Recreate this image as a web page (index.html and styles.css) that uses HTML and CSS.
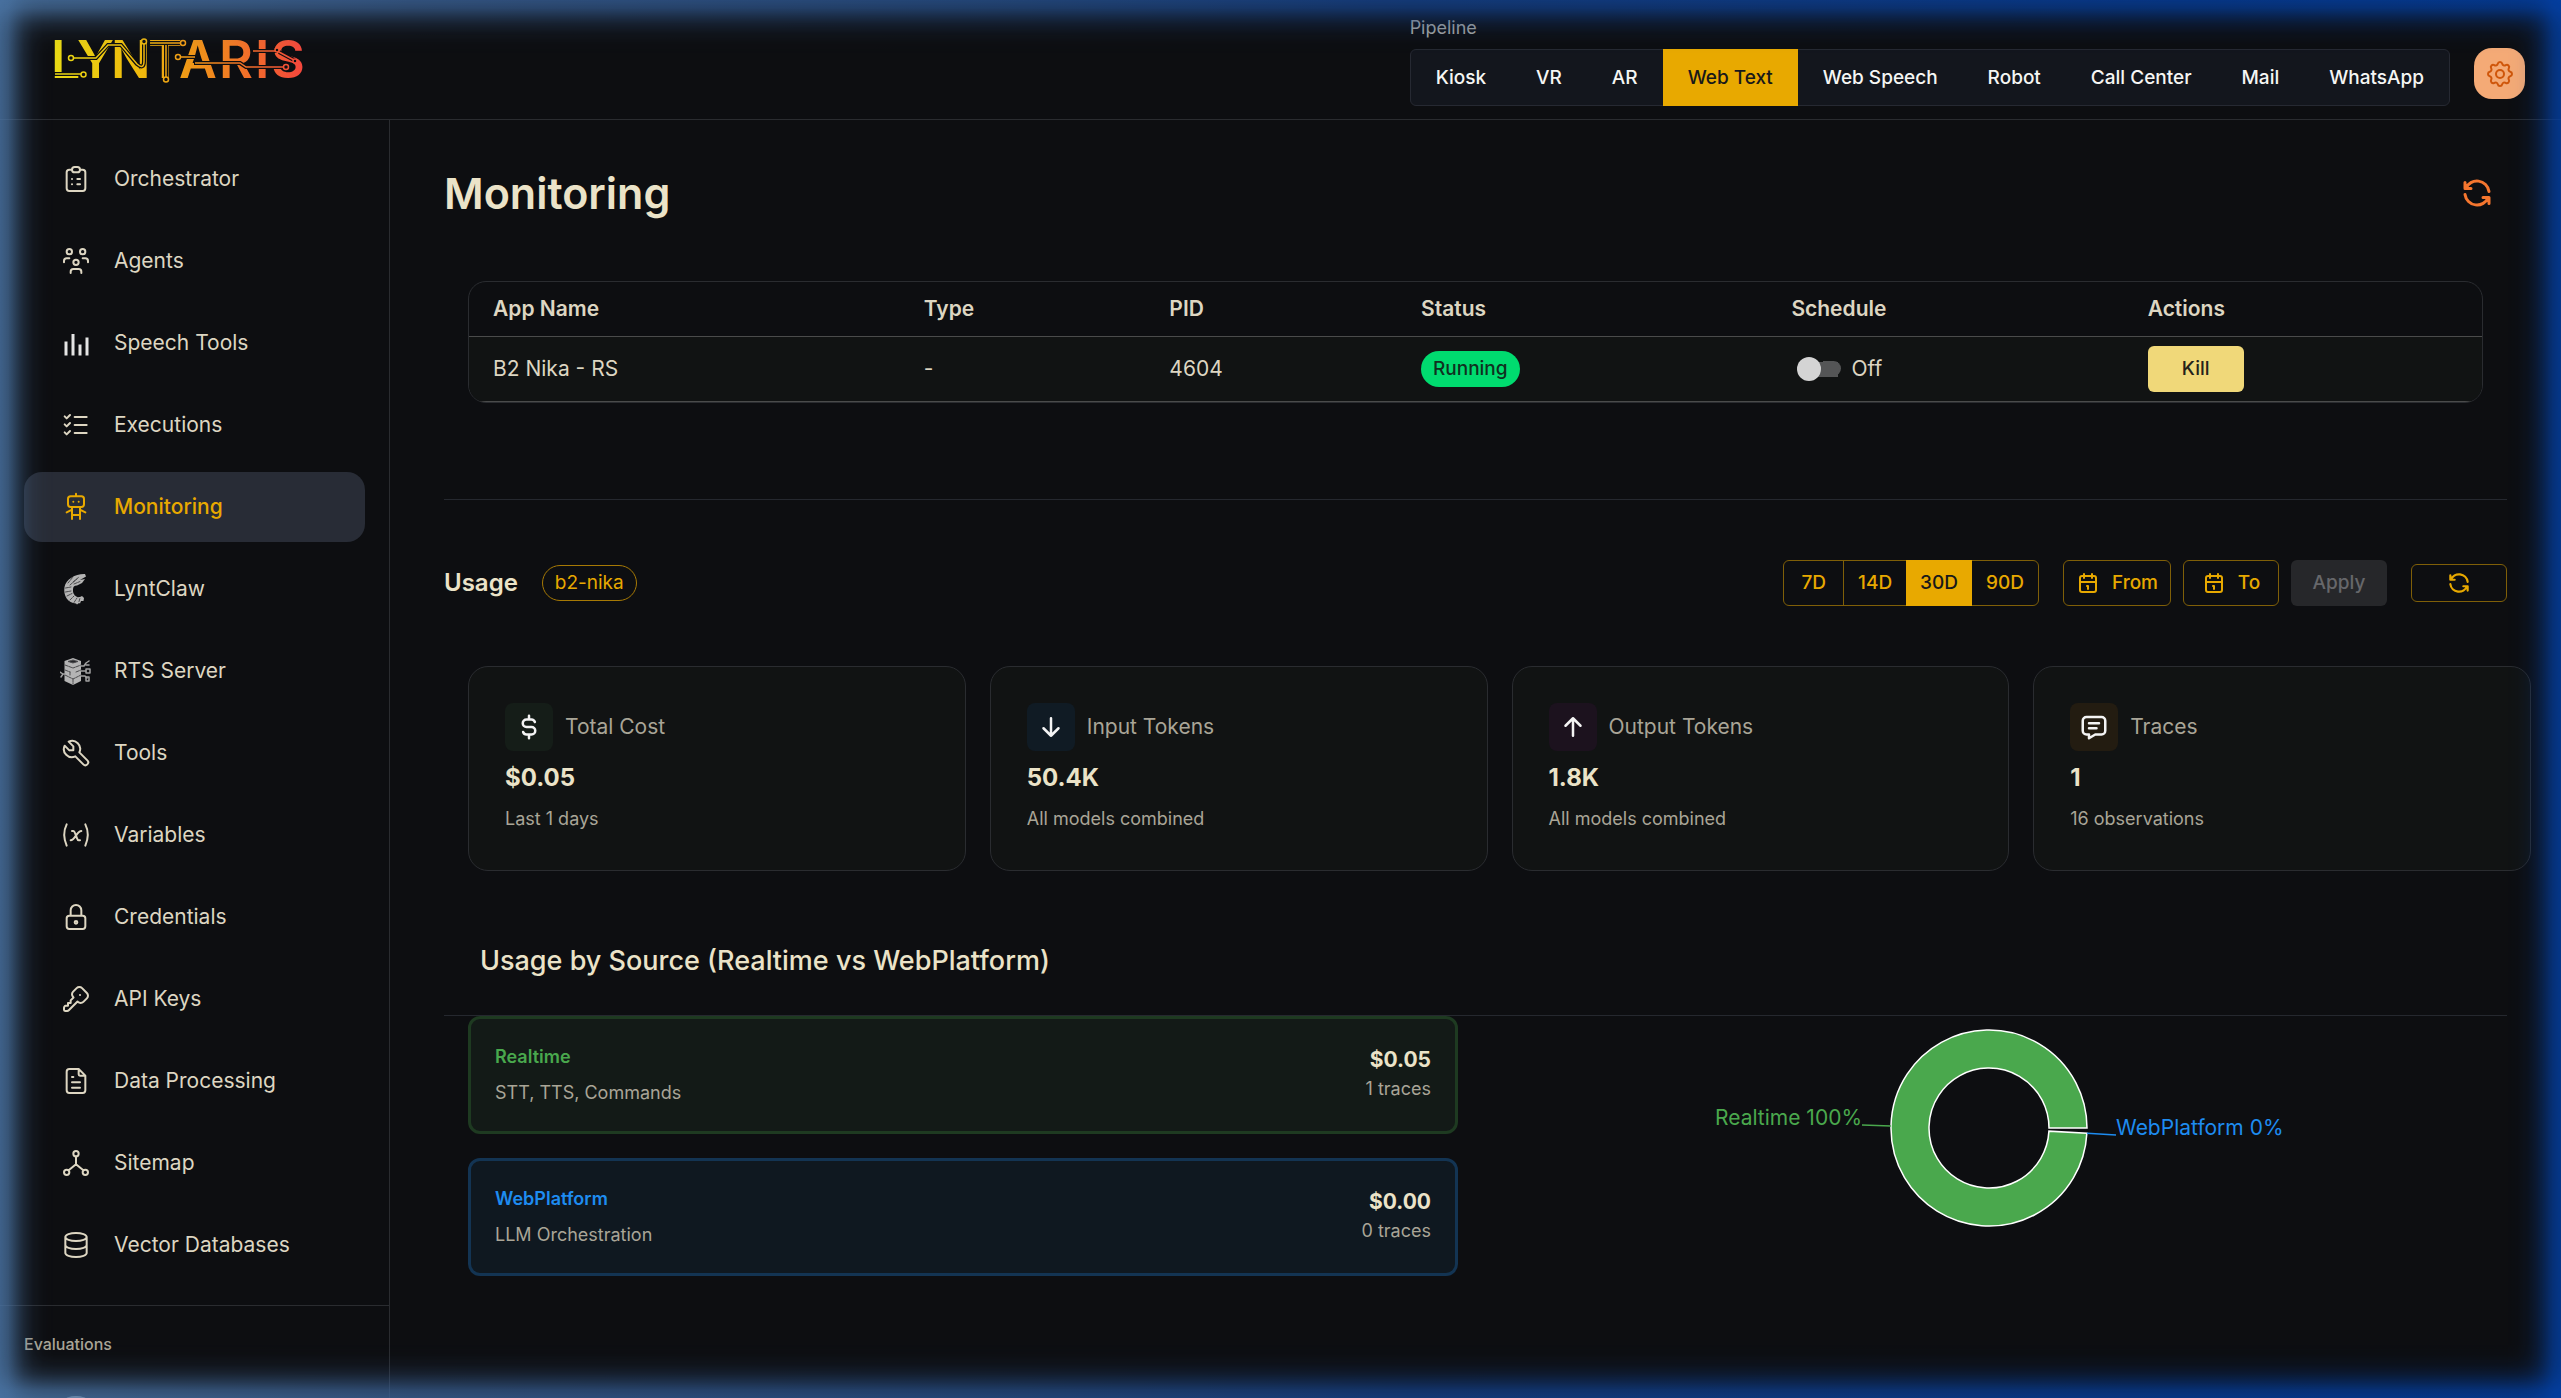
FILE: index.html
```html
<!DOCTYPE html>
<html lang="en">
<head>
<meta charset="utf-8">
<title>Lyntaris – Monitoring</title>
<link rel="stylesheet" href="styles.css">
</head>
<body>
<svg class="defs" aria-hidden="true">
  <symbol id="i-refresh" viewBox="0 0 24 24"><path d="M20 11a8.1 8.1 0 0 0 -15.5 -2m-.5 -4v4h4M4 13a8.1 8.1 0 0 0 15.5 2m.5 4v-4h-4"/></symbol>
  <symbol id="i-calendar" viewBox="0 0 24 24"><path d="M4 7a2 2 0 0 1 2 -2h12a2 2 0 0 1 2 2v12a2 2 0 0 1 -2 2h-12a2 2 0 0 1 -2 -2zM16 3v4M8 3v4M4 11h16M11 15h1M12 15v3"/></symbol>
  <symbol id="i-database" viewBox="0 0 24 24"><path d="M4 6a8 3 0 1 0 16 0a8 3 0 1 0 -16 0M4 6v6a8 3 0 0 0 16 0v-6M4 12v6a8 3 0 0 0 16 0v-6"/></symbol>
</svg>

<div class="app">
  <header class="topbar">
    <svg class="logo" viewBox="52 34 256 52" role="img" aria-label="Lyntaris">
      <defs>
        <linearGradient id="brand" gradientUnits="userSpaceOnUse" x1="55" y1="0" x2="302" y2="0">
          <stop offset="0" stop-color="#e9da14"/><stop offset=".35" stop-color="#efb80c"/>
          <stop offset=".65" stop-color="#f0861e"/><stop offset="1" stop-color="#f4473c"/>
        </linearGradient>
      </defs>
      <text class="logo-text" y="77" x="51 77 111 148 179 219 255 271" fill="url(#brand)">LYNTARIS</text>
      <g class="logo-gap">
        <path d="M54 73H84M71 57H96L108 44H121L137 63Q144 69 144 60V40"/>
        <path d="M149 42H183M166 44V79M178 56H196M194 62H240L246 66H286M252 50H277M279 51L296 60"/>
      </g>
      <g class="logo-wire">
        <path d="M55 73H81M73 57H96L108 44H121L137 63Q144 69 144 60V43"/>
        <path d="M150 42H181M166 44V76M180 56H195M195 62H240L246 66H284M253 50H276M279 51L294 59"/>
      </g>
      <g class="logo-node">
        <circle cx="83.500" cy="73.500" r="2.500"/><circle cx="71" cy="57" r="2.500"/><circle cx="144" cy="40.500" r="2.500"/>
        <circle cx="183" cy="42" r="2.500"/><circle cx="166" cy="78.500" r="2.500"/><circle cx="178" cy="56" r="2.500"/>
        <circle cx="286" cy="66" r="2.500"/><circle cx="277" cy="49" r="2"/><circle cx="295" cy="60" r="2"/>
      </g>
    </svg>

    <div class="pipeline">
      <span class="pipeline-label" id="pipeline-label">Pipeline</span>
      <div class="pipeline-group" role="group" aria-labelledby="pipeline-label">
        <button type="button">Kiosk</button>
        <button type="button">VR</button>
        <button type="button">AR</button>
        <button type="button" class="is-active" aria-pressed="true">Web Text</button>
        <button type="button">Web Speech</button>
        <button type="button">Robot</button>
        <button type="button">Call Center</button>
        <button type="button">Mail</button>
        <button type="button">WhatsApp</button>
      </div>
    </div>
    <button type="button" class="settings" aria-label="Settings">
      <svg class="icon" viewBox="0 0 24 24"><path d="M10.325 4.317c.426 -1.756 2.924 -1.756 3.35 0a1.724 1.724 0 0 0 2.573 1.066c1.543 -.94 3.31 .826 2.37 2.37a1.724 1.724 0 0 0 1.065 2.572c1.756 .426 1.756 2.924 0 3.35a1.724 1.724 0 0 0 -1.066 2.573c.94 1.543 -.826 3.31 -2.37 2.37a1.724 1.724 0 0 0 -2.572 1.065c-.426 1.756 -2.924 1.756 -3.35 0a1.724 1.724 0 0 0 -2.573 -1.066c-1.543 .94 -3.31 -.826 -2.37 -2.37a1.724 1.724 0 0 0 -1.065 -2.572c-1.756 -.426 -1.756 -2.924 0 -3.35a1.724 1.724 0 0 0 1.066 -2.573c-.94 -1.543 .826 -3.31 2.37 -2.37c1 .608 2.296 .07 2.572 -1.065zM9 12a3 3 0 1 0 6 0a3 3 0 0 0 -6 0"/></svg>
    </button>
  </header>

  <nav class="sidebar" aria-label="Main">
    <div class="nav-group">
      <a href="#"><svg class="icon" viewBox="0 0 24 24"><path d="M9 5h-2a2 2 0 0 0 -2 2v12a2 2 0 0 0 2 2h10a2 2 0 0 0 2 -2v-12a2 2 0 0 0 -2 -2h-2M9 5a2 2 0 0 1 2 -2h2a2 2 0 0 1 2 2a2 2 0 0 1 -2 2h-2a2 2 0 0 1 -2 -2zM9 12h.01M13 12h2M9 16h.01M13 16h2"/></svg>Orchestrator</a>
      <a href="#"><svg class="icon" viewBox="0 0 24 24"><path d="M10 13a2 2 0 1 0 4 0a2 2 0 0 0 -4 0M8 21v-1a2 2 0 0 1 2 -2h4a2 2 0 0 1 2 2v1M15 5a2 2 0 1 0 4 0a2 2 0 0 0 -4 0M17 10h2a2 2 0 0 1 2 2v1M5 5a2 2 0 1 0 4 0a2 2 0 0 0 -4 0M3 13v-1a2 2 0 0 1 2 -2h2"/></svg>Agents</a>
      <a href="#"><svg class="icon icon-bars" viewBox="0 0 32 32"><path d="M6 14.500v14M13 7v21.500M20 17.500v11M27 10.500v18"/></svg>Speech Tools</a>
      <a href="#"><svg class="icon" viewBox="0 0 24 24"><path d="M3.500 5.500l1.500 1.500l2.500 -2.500M3.500 11.500l1.500 1.500l2.500 -2.500M3.500 17.500l1.500 1.500l2.500 -2.500M11 6h9M11 12h9M11 18h9"/></svg>Executions</a>
      <a href="#" class="is-active" aria-current="page"><svg class="icon" viewBox="0 0 24 24"><path d="M6 6a2 2 0 0 1 2 -2h8a2 2 0 0 1 2 2v4a2 2 0 0 1 -2 2h-8a2 2 0 0 1 -2 -2zM12 2v2M9 12v9M15 12v9M5 16l4 -2M15 14l4 2M9 18h6M10 8v.01M14 8v.01"/></svg>Monitoring</a>
      <a href="#"><svg class="icon icon-solid" viewBox="0 0 32 32">
        <path d="M25 1C16 .5 6 6 4.500 14C3 23 8 30 16 30.500L17 31.500L19 30L20 30.500L21 28L23.500 28L24 25L22 23L20 24C16 25 12.500 21 13 16.500C13 14 14 12.500 17 12.500L22 10L25 6L20 7L26 3.500Z"/>
        <path class="etch" d="M8 10L13 4M10 12L17 6M13 9L19 4M5.500 15L11 14M5.500 19L11 18M7 23L12 20.500M10 27L14 23M14 29.500L17 25M19 28.500L20 25M14 11L20 8.500"/>
      </svg>LyntClaw</a>
      <a href="#"><svg class="icon icon-solid" viewBox="0 0 32 32">
        <path d="M4.500 6L13 3L21 6V26L13 30L4.500 26Z"/>
        <path class="etch etch-fill" d="M8 6.500L13 5L18 6.500L13 8Z"/>
        <path class="etch" d="M5 10L13 13L21 10M5 15L10 17M16 17L21 15M5 20L13 24L21 20M13 24V29M10 17V21"/>
        <path class="trace" d="M0 17L3 19H5M3 19L1 22M21 11H24L26 8L29 6M26 10H29M21 16H26M21 21H25L27 23"/>
        <path class="trace" d="M26 14h4v4h-4zM26 22h3v4h-3z"/>
      </svg>RTS Server</a>
      <a href="#"><svg class="icon" viewBox="0 0 24 24"><path d="M7 10h3v-3l-3.500 -3.500a6 6 0 0 1 8 8l6 6a2 2 0 0 1 -3 3l-6 -6a6 6 0 0 1 -8 -8l3.500 3.500"/></svg>Tools</a>
      <a href="#"><svg class="icon" viewBox="0 0 24 24"><path d="M5 4c-2.500 5 -2.500 10 0 16m14 -16c2.500 5 2.500 10 0 16m-10 -11h1c1 0 1 1 2.016 3.527c.984 2.473 .984 3.473 1.984 3.473h1M8 16c1.500 0 3 -2 4 -3.500s2.500 -3.500 4 -3.500"/></svg>Variables</a>
      <a href="#"><svg class="icon" viewBox="0 0 24 24"><path d="M5 13a2 2 0 0 1 2 -2h10a2 2 0 0 1 2 2v6a2 2 0 0 1 -2 2h-10a2 2 0 0 1 -2 -2zM11 16a1 1 0 1 0 2 0a1 1 0 0 0 -2 0M8 11v-4a4 4 0 1 1 8 0v4"/></svg>Credentials</a>
      <a href="#"><svg class="icon" viewBox="0 0 24 24"><path d="M16.555 3.843l3.602 3.602a2.877 2.877 0 0 1 0 4.069l-2.643 2.643a2.877 2.877 0 0 1 -4.069 0l-.301 -.301l-6.558 6.558a2 2 0 0 1 -1.239 .578l-.175 .008h-1.172a1 1 0 0 1 -.993 -.883l-.007 -.117v-1.172a2 2 0 0 1 .467 -1.284l.119 -.13l.414 -.414h2v-2h2v-2l2.144 -2.144l-.301 -.301a2.877 2.877 0 0 1 0 -4.069l2.643 -2.643a2.877 2.877 0 0 1 4.069 0zM15 9h.01"/></svg>API Keys</a>
      <a href="#"><svg class="icon" viewBox="0 0 24 24"><path d="M14 3v4a1 1 0 0 0 1 1h4M17 21h-10a2 2 0 0 1 -2 -2v-14a2 2 0 0 1 2 -2h7l5 5v11a2 2 0 0 1 -2 2zM9 9h1M9 13h6M9 17h6"/></svg>Data Processing</a>
      <a href="#"><svg class="icon" viewBox="0 0 24 24"><path d="M10 5a2 2 0 1 0 4 0a2 2 0 1 0 -4 0M3 19a2 2 0 1 0 4 0a2 2 0 1 0 -4 0M17 19a2 2 0 1 0 4 0a2 2 0 1 0 -4 0M6.500 17.500l5.500 -4.500l5.500 4.500M12 7v6"/></svg>Sitemap</a>
      <a href="#"><svg class="icon"><use href="#i-database"/></svg>Vector Databases</a>
    </div>
    <div class="nav-group">
      <h2>Evaluations</h2>
      <a href="#"><svg class="icon"><use href="#i-database"/></svg></a>
    </div>
  </nav>

  <main class="content">
    <div class="title-row">
      <h1>Monitoring</h1>
      <button type="button" class="refresh-page" aria-label="Refresh"><svg class="icon"><use href="#i-refresh"/></svg></button>
    </div>

    <div class="table-wrap">
      <table>
        <colgroup><col class="c-name"><col class="c-type"><col class="c-pid"><col class="c-status"><col class="c-schedule"><col></colgroup>
        <thead>
          <tr><th scope="col">App Name</th><th scope="col">Type</th><th scope="col">PID</th><th scope="col">Status</th><th scope="col">Schedule</th><th scope="col">Actions</th></tr>
        </thead>
        <tbody>
          <tr>
            <td>B2 Nika - RS</td><td>-</td><td>4604</td>
            <td><span class="chip chip-running">Running</span></td>
            <td><label class="switch"><input type="checkbox">Off</label></td>
            <td><button type="button" class="btn btn-kill">Kill</button></td>
          </tr>
        </tbody>
      </table>
    </div>

    <hr>

    <section class="usage-bar">
      <h2>Usage</h2>
      <span class="chip chip-outline">b2-nika</span>
      <div class="periods" role="group" aria-label="Usage">
        <button type="button">7D</button>
        <button type="button">14D</button>
        <button type="button" class="is-active" aria-pressed="true">30D</button>
        <button type="button">90D</button>
      </div>
      <div class="range">
        <button type="button" class="btn btn-outline"><svg class="icon"><use href="#i-calendar"/></svg>From</button>
        <button type="button" class="btn btn-outline"><svg class="icon"><use href="#i-calendar"/></svg>To</button>
        <button type="button" class="btn" disabled>Apply</button>
      </div>
      <button type="button" class="btn btn-outline btn-reload" aria-label="Refresh"><svg class="icon"><use href="#i-refresh"/></svg></button>
    </section>

    <section class="cards">
      <article class="card">
        <header><span class="tile tile-green"><svg class="icon" viewBox="0 0 24 24"><path d="M16.700 8a3 3 0 0 0 -2.700 -2h-4a3 3 0 0 0 0 6h4a3 3 0 0 1 0 6h-4a3 3 0 0 1 -2.700 -2M12 3v3m0 12v3"/></svg></span><h3>Total Cost</h3></header>
        <strong>$0.05</strong>
        <p>Last 1 days</p>
      </article>
      <article class="card">
        <header><span class="tile tile-blue"><svg class="icon" viewBox="0 0 24 24"><path d="M12 5v14M18 13l-6 6M6 13l6 6"/></svg></span><h3>Input Tokens</h3></header>
        <strong>50.4K</strong>
        <p>All models combined</p>
      </article>
      <article class="card">
        <header><span class="tile tile-purple"><svg class="icon" viewBox="0 0 24 24"><path d="M12 5v14M18 11l-6 -6M6 11l6 -6"/></svg></span><h3>Output Tokens</h3></header>
        <strong>1.8K</strong>
        <p>All models combined</p>
      </article>
      <article class="card">
        <header><span class="tile tile-amber"><svg class="icon" viewBox="0 0 24 24"><path d="M8 9h8M8 13h6M18 4a3 3 0 0 1 3 3v8a3 3 0 0 1 -3 3h-5l-5 3v-3h-2a3 3 0 0 1 -3 -3v-8a3 3 0 0 1 3 -3z"/></svg></span><h3>Traces</h3></header>
        <strong>1</strong>
        <p>16 observations</p>
      </article>
    </section>

    <section class="sources">
      <h2>Usage by Source (Realtime vs WebPlatform)</h2>
      <div class="sources-grid">
        <div class="source-list">
          <article class="source source-realtime">
            <div><h3>Realtime</h3><p>STT, TTS, Commands</p></div>
            <div class="source-sum"><strong>$0.05</strong><p>1 traces</p></div>
          </article>
          <article class="source source-web">
            <div><h3>WebPlatform</h3><p>LLM Orchestration</p></div>
            <div class="source-sum"><strong>$0.00</strong><p>0 traces</p></div>
          </article>
        </div>
        <svg class="donut" viewBox="-300 -112 600 240" role="img" aria-label="Realtime 100%, WebPlatform 0%">
          <path class="slice" d="M98 0A98 98 0 1 0 97.870 5.130L59.920 3.140A60 60 0 1 1 60 0Z"/>
          <path class="lead-green" d="M-98 -2L-127 -3"/>
          <path class="lead-blue" d="M98 5.200L127 7"/>
          <text class="label-green" x="-127" y="-3" text-anchor="end">Realtime 100%</text>
          <text class="label-blue" x="127" y="7">WebPlatform 0%</text>
        </svg>
      </div>
    </section>
  </main>
</div>
<div class="glow"></div>
</body>
</html>
```
FILE: styles.css
```css
:root {
  --bg: #0d0e11;
  --panel: #111313;
  --line: #2a2c30;
  --cream: #ebe3c8;
  --text: #ddd6c2;
  --muted: #a9a597;
  --gold: #e8a900;
  --gold-line: #7f5f08;
}

* { box-sizing: border-box; }

body {
  margin: 0;
  background: var(--bg);
  color: var(--text);
  font: 400 21px/32px Inter, "Liberation Sans", sans-serif;
}

h1, h2, h3, p { margin: 0; font-weight: 400; }
button { font: inherit; color: inherit; margin: 0; cursor: pointer; }
.defs { display: none; }

.icon {
  flex: none;
  width: 32px;
  height: 32px;
  fill: none;
  stroke: currentColor;
  stroke-width: 1.5;
  stroke-linecap: round;
  stroke-linejoin: round;
}

.app {
  display: grid;
  grid-template: auto minmax(0, 1fr) / 390px minmax(0, 1fr);
  height: 100vh;
  overflow: hidden;
}

/* Top bar */
.topbar {
  grid-column: 1 / -1;
  display: flex;
  align-items: center;
  gap: 24px;
  padding: 16px 36px 13px 52px;
  border-bottom: 1px solid var(--line);
}
.logo { width: 256px; height: 52px; margin-right: auto; overflow: visible; }
.logo-text { font: 600 52px Inter, "Liberation Sans", sans-serif; }
.logo-gap { fill: none; stroke: var(--bg); stroke-width: 4; }
.logo-wire { fill: none; stroke: url(#brand); stroke-width: 1.5; }
.logo-node { fill: var(--bg); stroke: url(#brand); stroke-width: 1.5; }

.pipeline { display: grid; gap: 9px; }
.pipeline-label { font-size: 18px; line-height: 24px; color: #a3a39f; }
.pipeline-group {
  display: flex;
  height: 57px;
  border: 1px solid #262932;
  border-radius: 6px;
  background: #13161d;
}
.pipeline-group button {
  padding: 0 25px;
  border: 0;
  background: none;
  color: #f6f6f4;
  font-size: 19px;
  font-weight: 500;
}
.pipeline-group .is-active {
  margin: -1px 0;
  background: var(--gold);
  color: #17181a;
}
.settings {
  display: grid;
  place-items: center;
  align-self: flex-end;
  width: 51px;
  height: 51px;
  margin-bottom: 7px;
  padding: 0;
  border: 0;
  border-radius: 18px;
  background: #f4aa76;
  color: #cf560a;
}

/* Sidebar */
.sidebar { border-right: 1px solid var(--line); overflow: hidden; }
.nav-group { display: grid; gap: 12px; padding: 24px 24px 25px; }
.nav-group + .nav-group { border-top: 1px solid var(--line); gap: 16px; }
.nav-group h2 { font-size: 16px; line-height: 28px; font-weight: 500; color: var(--muted); }
.nav-group a {
  display: flex;
  align-items: center;
  gap: 22px;
  height: 70px;
  padding: 0 36px;
  border-radius: 18px;
  color: var(--text);
  text-decoration: none;
}
.nav-group .is-active { background: #282c36; color: var(--gold); font-weight: 500; }
.icon-bars { color: #e4e4e4; stroke-width: 3; stroke-linecap: butt; }
.icon-solid { fill: #b4b4b4; stroke: none; }
.icon-solid .etch { fill: none; stroke: #4c4c4e; stroke-width: 1; stroke-dasharray: 3 1; }
.icon-solid .etch-fill { fill: #26272a; }
.icon-solid .trace { fill: none; stroke: #a0a0a0; stroke-width: 1.5; }

/* Content */
.content { padding: 43px 54px 24px; overflow: hidden; }
.title-row { display: flex; align-items: center; justify-content: space-between; }
h1 { font-size: 43px; line-height: 60px; font-weight: 600; color: var(--cream); }
.refresh-page {
  display: grid;
  place-items: center;
  width: 60px;
  height: 60px;
  padding: 0;
  border: 0;
  background: none;
  color: #f5762f;
}
.refresh-page .icon { width: 36px; height: 36px; stroke-width: 2; }

.table-wrap {
  margin: 58px 24px 96px;
  border: 1px solid var(--line);
  border-radius: 18px;
  overflow: hidden;
}
table { width: 100%; table-layout: fixed; border-collapse: separate; border-spacing: 0; }
.c-name { width: 21.4%; }
.c-type { width: 12.2%; }
.c-pid { width: 12.5%; }
.c-status { width: 18.4%; }
.c-schedule { width: 17.7%; }
th, td { padding: 0 24px; text-align: left; vertical-align: middle; border-bottom: 1px solid #4a4b4b; }
th { height: 55px; font-weight: 600; }
td { height: 65px; background: var(--panel); }

.chip {
  display: inline-block;
  height: 36px;
  padding: 0 12px;
  border-radius: 18px;
  font-size: 19px;
  line-height: 36px;
  vertical-align: middle;
}
.chip-running { background: #00db6f; color: #10301f; font-weight: 500; }
.chip-outline { border: 1px solid #a67905; color: var(--gold); line-height: 34px; }

.switch { display: flex; align-items: center; gap: 10px; padding-left: 6px; }
.switch input {
  appearance: none;
  position: relative;
  width: 44px;
  height: 24px;
  margin: 0;
  background: linear-gradient(#545556, #545556) center / 38px 15px no-repeat;
}
.switch input::before {
  content: "";
  position: absolute;
  inset: 0 20px 0 0;
  border-radius: 50%;
  background: #d4d4d4;
}
.switch input::after {
  content: "";
  position: absolute;
  inset: 4px 0 5px 26px;
  border-radius: 0 8px 8px 0;
  background: #545556;
}

.btn {
  display: inline-flex;
  align-items: center;
  justify-content: center;
  gap: 12px;
  min-width: 96px;
  height: 46px;
  padding: 0 12px;
  border: 0;
  border-radius: 6px;
  font-size: 19px;
  line-height: 24px;
  font-weight: 500;
  vertical-align: middle;
}
.btn:disabled { background: #26272a; color: #66676a; cursor: default; }
.btn .icon { width: 24px; height: 24px; stroke-width: 2; }
.btn-kill { background: #f0d879; color: #25221a; }
.btn-outline { border: 1px solid var(--gold-line); background: none; color: var(--gold); }

hr { margin: 0 0 60px; border: 0; border-top: 1px solid #25282f; }

.usage-bar { display: flex; align-items: center; gap: 24px; margin-bottom: 60px; }
.usage-bar h2 { font-size: 24px; font-weight: 600; color: var(--cream); }
.periods {
  display: flex;
  height: 46px;
  margin-left: auto;
  border: 1px solid var(--gold-line);
  border-radius: 6px;
}
.periods button {
  padding: 0 14px;
  border: 0;
  background: none;
  color: var(--gold);
  font-size: 19px;
  font-weight: 500;
}
.periods button:first-child { padding: 0 17px; border-right: 1px solid var(--gold-line); }
.periods .is-active { margin: -1px 0; background: var(--gold); color: #17181a; }
.range { display: flex; gap: 12px; }
.usage-bar .btn-reload { height: 38px; }
.btn-reload .icon { width: 26px; height: 26px; }

/* Summary cards run past the content edge by one gutter */
.cards {
  display: grid;
  grid-template-columns: repeat(4, minmax(0, 1fr));
  gap: 24px;
  margin: 0 -24px 48px 24px;
}
.card { padding: 36px; border: 1px solid var(--line); border-radius: 20px; background: var(--panel); }
.card header { display: flex; align-items: center; gap: 12px; color: var(--muted); }
.card h3 { font-size: 21px; }
.card strong { display: block; margin: 11px 0 10px; font-size: 24px; line-height: 32px; color: var(--cream); }
.card p { font-size: 18px; line-height: 30px; color: var(--muted); }
.tile { display: grid; place-items: center; width: 48px; height: 48px; border-radius: 8px; color: #f4f4f4; }
.tile .icon { width: 30px; height: 30px; stroke-width: 2; }
.tile-green { background: #151d18; }
.tile-blue { background: #101b24; }
.tile-purple { background: #1c121e; }
.tile-amber { background: #231c11; }

/* Usage by source */
.sources h2 {
  padding: 22px 36px 34px;
  border-bottom: 1px solid #25282f;
  font-size: 27px;
  line-height: 40px;
  font-weight: 500;
  color: var(--cream);
}
.sources-grid {
  display: grid;
  grid-template-columns: 990fr 1013fr;
  gap: 24px;
  padding: 0 12px 0 24px;
}
.source-list { display: grid; align-content: start; gap: 24px; }
.source {
  display: flex;
  justify-content: space-between;
  padding: 24px;
  border: 3px solid;
  border-radius: 12px;
}
.source-realtime { border-color: #1e3a21; background: #131a17; }
.source-web { border-color: #133453; background: #0f1820; }
.source h3 { margin-bottom: 8px; font-size: 18px; line-height: 28px; font-weight: 600; }
.source p { font-size: 18px; line-height: 28px; color: var(--muted); }
.source-realtime h3 { color: #49a84d; }
.source-web h3 { color: #1e8cf0; }
.source-sum { text-align: right; }
.source-sum strong { display: block; margin-top: 2px; font-size: 21px; line-height: 30px; color: var(--cream); }

.donut { width: 600px; height: 240px; justify-self: center; font-size: 21px; }
.slice { fill: #4aa84d; stroke: #fff; stroke-width: 1.5; }
.lead-green { stroke: #4aa84d; stroke-width: 1.5; }
.lead-blue { stroke: #1e8cf0; stroke-width: 1.5; }
.label-green { fill: #4aa84d; }
.label-blue { fill: #1e8cf0; }

/* Blue glow along the window edges */
.glow {
  --fade: rgb(0 0 0 / .82), rgb(0 0 0 / .7) 8px, rgb(0 0 0 / .46) 16px, rgb(0 0 0 / .24) 24px, rgb(0 0 0 / .09) 33px, rgb(0 0 0 / .02) 43px, transparent 54px;
  position: fixed;
  inset: 0;
  z-index: 10;
  pointer-events: none;
  background: linear-gradient(to right, #4a74a4, #3a6093 16%, #264f8a 40%, #15428b 55%, #053e9c 85%, #0340a4);
  mask-image:
    linear-gradient(to right, var(--fade)),
    linear-gradient(to left, var(--fade)),
    linear-gradient(to bottom, var(--fade)),
    linear-gradient(to top, var(--fade));
  mask-composite: add;
}
```
